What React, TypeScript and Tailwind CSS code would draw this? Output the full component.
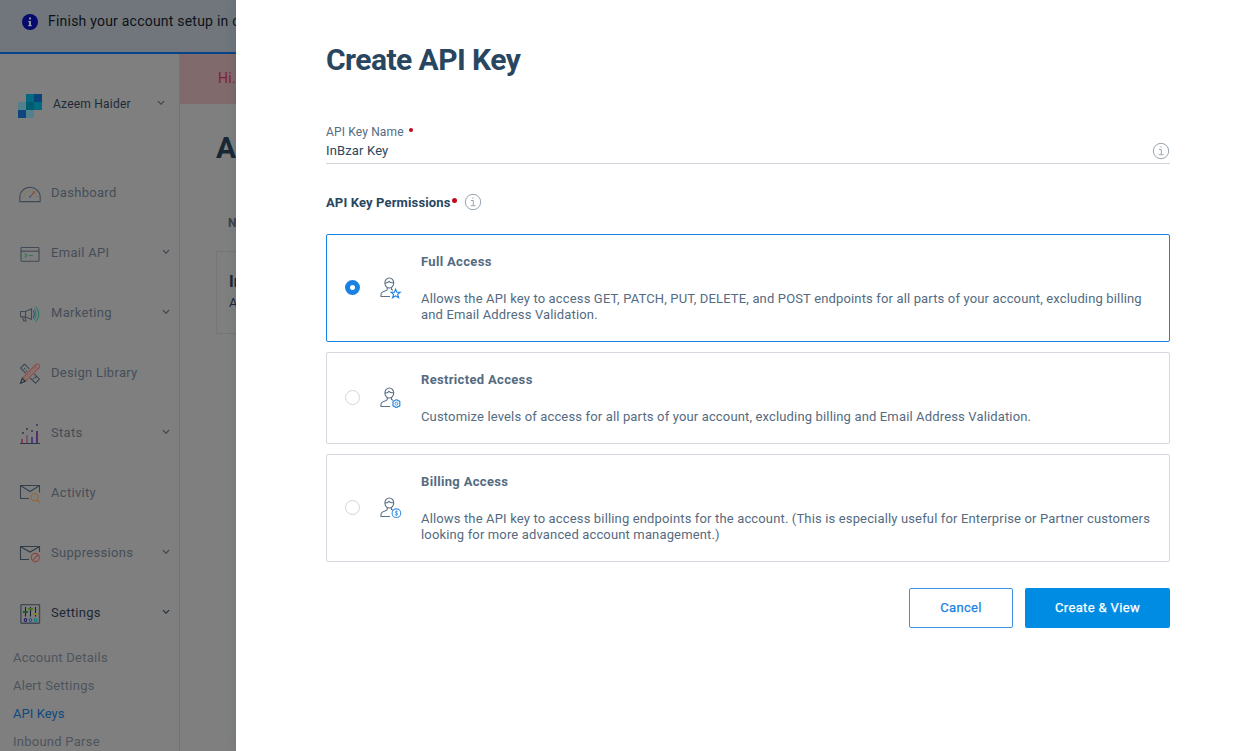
import type { ReactNode } from "react";

const S = ({ children }: { children: ReactNode }) => (
  <svg width="24" height="24" viewBox="0 0 24 24" fill="none" stroke="#3f4a55" strokeWidth="1.1" className="shrink-0">
    {children}
  </svg>
);

const Chevron = ({ dark }: { dark?: boolean }) => (
  <svg width="8" height="6" viewBox="0 0 8 6" fill="none" stroke={dark ? "#1c2935" : "#35414d"} strokeWidth="1.1" className="-mt-[3px] shrink-0">
    <path d="M1 1.2 4 4.3 7 1.2" />
  </svg>
);

const icons: Record<string, ReactNode> = {
  Dashboard: (
    <S>
      <path d="M1.8 20.6V16.2A10.2 10 0 0 1 22.2 16.2V20.6Z" />
      <path d="M5 17A7 7 0 0 1 19 17" stroke="#806f3c" strokeDasharray="1.3 2" />
      <path d="M12.3 15.5 17 10.3" stroke="#8e4a44" strokeWidth="1.2" />
      <circle cx="12" cy="16" r="1" fill="#2a6584" stroke="none" />
    </S>
  ),
  "Email API": (
    <S>
      <rect x="3" y="6.5" width="18" height="13.8" rx="0.8" />
      <path d="M3 10.2H21" />
      <path d="M6.7 12.3 8.9 14.5 6.7 16.7" stroke="#2e7c50" strokeWidth="1.2" />
      <path d="M11 14.5H15" stroke="#3d735b" />
    </S>
  ),
  Marketing: (
    <S>
      <path d="M2.5 10.5H7.5L13.5 7.8V18.5L7.5 15.8H2.5Z M7.5 10.5V15.8 M4.2 15.8 5.8 20H8L7 16" />
      <path d="M15.2 9.5Q17.4 13 15.2 17" stroke="#31577b" />
      <path d="M16 7.5Q20 13 16 19" stroke="#2f7480" />
      <path d="M17.7 5.5Q24 13 17.7 21" stroke="#2b7959" />
    </S>
  ),
  "Design Library": (
    <S>
      <path d="M11.3 7.8 6.5 3 2.5 7 7.8 12.3 M16 12.7 21.5 18.2 17.5 22.2 12.2 17 M5.7 8.3 7.2 6.8 M8 10.5 9 9.5 M15 18 16.2 16.8 M16.8 15.5 18.3 17" />
      <path d="M4.3 17.3 18 3.5Q19.5 2.3 21 3.8Q22.3 5.3 20.8 6.8L7.3 20.3" stroke="#984941" />
      <path d="M16.8 4.8 19.5 7.7 M5.8 18.8 18 6.4" stroke="#984941" strokeWidth="0.8" />
      <path d="M4.3 17.3 2.5 22.3 7.3 20.3Z" stroke="#27323d" />
    </S>
  ),
  Stats: (
    <S>
      <g stroke="none">
        <path fill="#883e52" d="M3 18h2v4H3z" />
        <path fill="#775777" d="M8 14h2v8H8z" />
        <path fill="#4c3e80" d="M13 16h2v6h-2z" />
        <path fill="#533066" d="M18 10h2v12h-2z" />
        <path fill="#2d3a46" d="M2 22h20v1H2z" />
        <path fill="#3f4a55" d="M4 11h2v2H4zM8 7h2v2H8zM13 9h2v2h-2zM18 3h2v2h-2z" />
      </g>
    </S>
  ),
  Activity: (
    <S>
      <path d="M11 17.5H2.5V4.5H21.5V11.5 M2.7 4.7 12 10.5 21.3 4.7" stroke="#35424e" />
      <circle cx="16.5" cy="16.3" r="3.6" stroke="#9a672f" />
      <path d="M19.2 19 22 21.8" stroke="#9a672f" />
    </S>
  ),
  Suppressions: (
    <S>
      <path d="M11 18.5H2.5V5.5H21.5V11 M2.7 5.7 12 11 21.3 5.7" stroke="#2f3d49" />
      <circle cx="17.3" cy="16.5" r="4.1" stroke="#90443a" />
      <path d="M14.5 19.4 20.2 13.6" stroke="#90443a" strokeWidth="1.3" />
    </S>
  ),
  Settings: (
    <S>
      <rect x="2.9" y="3.6" width="18.6" height="18.6" rx="0.6" strokeWidth="1.4" />
      <path d="M7.5 6V15.5M12.5 6V15.5M17.5 6V15.5" stroke="#17232f" />
      <path d="M5 11H10" stroke="#1f5a2d" strokeWidth="2" />
      <path d="M10 8H15" stroke="#4e7220" strokeWidth="2" />
      <path d="M15 13H20" stroke="#858522" strokeWidth="2" />
      <ellipse cx="7.5" cy="19" rx="1.2" ry="1.5" stroke="#241e66" strokeWidth="1.2" />
      <ellipse cx="12.5" cy="19" rx="1.2" ry="1.5" stroke="#155b94" strokeWidth="1.2" />
      <ellipse cx="17.6" cy="19" rx="1.2" ry="1.5" stroke="#0f8085" strokeWidth="1.2" />
    </S>
  ),
};

const nav: [string, boolean][] = [
  ["Dashboard", false],
  ["Email API", true],
  ["Marketing", true],
  ["Design Library", false],
  ["Stats", true],
  ["Activity", false],
  ["Suppressions", true],
  ["Settings", true],
];

const Logo = () => (
  <svg width="24" height="24" viewBox="0 0 24 24" shapeRendering="crispEdges">
    <path fill="#056a80" d="M8 0h8v8H8z" />
    <path fill="#0a4379" d="M16 0h8v8h-8z" />
    <path fill="#53818b" d="M0 8h8v8H0zM8 16h8v8H8z" />
    <path fill="#005c70" d="M8 8h8v8H8z" />
    <path fill="#006a80" d="M16 8h8v8h-8z" />
    <path fill="#0c467c" d="M0 16h8v8H0z" />
  </svg>
);

const Info = () => (
  <svg width="18" height="18" viewBox="0 0 18 18" fill="none" stroke="#97a5b2" className="shrink-0">
    <circle cx="9" cy="9" r="7.7" />
    <path d="M7 7.5H9.3V12.5M6.8 12.7H11.5M8.3 5H9.6" />
  </svg>
);

const User = ({ badge }: { badge: string }) => (
  <svg width="22" height="22" viewBox="0 0 22 22" fill="none" stroke="#5a7084" strokeWidth="1.1" className="shrink-0">
    <ellipse cx="9.3" cy="6" rx="4.4" ry="5" />
    <path d="M5 6Q7.5 6 9 4.3 10.5 6 13.7 5.7M7.2 10.5V12.5Q7.2 13.3 5 14 1 15.2 1 17.5V19.5H10M11.5 10.5V12.5L13 13.2" />
    {badge === "star" && (
      <path stroke="#1a82e2" d="m15.6 12.3 1.2 3h3.4l-2.6 2.1 1 3.3-3-1.9-3 1.9 1-3.3-2.6-2.1h3.4z" />
    )}
    {badge === "gear" && (
      <g stroke="#3b93e6">
        <path strokeWidth="1.3" d="m14.7 13.8 1-.9h1.4l1 .9 1.2.1.7 1.4-.4 1.3.4 1.3-.7 1.4-1.2.1-1 .9h-1.4l-1-.9-1.2-.1-.7-1.4.4-1.3-.4-1.3.7-1.4z" />
        <circle cx="16.4" cy="16.6" r="1.4" strokeWidth="1" />
      </g>
    )}
    {badge === "dollar" && (
      <g stroke="#3b93e6">
        <circle cx="16.4" cy="16.2" r="4.3" />
        <path d="M18 14.9Q16.4 13.9 15.3 14.9 14.9 16 16.4 16.2 18.2 16.5 17.6 17.6 16.5 18.6 14.9 17.6M16.4 13.3V19.1" strokeWidth=".8" />
      </g>
    )}
  </svg>
);

const options = [
  { title: "Full Access", badge: "star", on: true, lines: ["Allows the API key to access GET, PATCH, PUT, DELETE, and POST endpoints for all parts of your account, excluding billing", "and Email Address Validation."] },
  { title: "Restricted Access", badge: "gear", on: false, lines: ["Customize levels of access for all parts of your account, excluding billing and Email Address Validation."] },
  { title: "Billing Access", badge: "dollar", on: false, lines: ["Allows the API key to access billing endpoints for the account. (This is especially useful for Enterprise or Partner customers", "looking for more advanced account management.)"] },
];

export default function App() {
  return (
    <div className="relative h-[751px] w-[1256px] overflow-hidden bg-[#7f7f7f] font-['Roboto','Liberation_Sans',sans-serif] text-[13px] whitespace-nowrap">
      <div className="flex h-[54px] items-start border-b-2 border-[#07438a] bg-[#70767b] pt-[13px] pl-[22px]">
        <svg width="16" height="16" viewBox="0 0 16 16" className="mt-[1px]">
          <circle cx="8" cy="8" r="8" fill="#06096e" />
          <path fill="#90959c" d="M7 3.5h2v2H7zM6.3 7H9v4h.8v1.2H6.2V11H7V8.2h-.7z" />
        </svg>
        <span className="ml-[10px] text-[14px] leading-4 tracking-[0.22px] text-[#0d1118]">Finish your account setup in order</span>
      </div>
      <div className="flex h-[697px]">
        <aside className="flex w-[180px] shrink-0 flex-col border-r border-[#717376]">
          <div className="mt-10 flex h-6 items-center pl-[18px]">
            <Logo />
            <span className="-mt-1 ml-[11px] w-[104px] text-[12px] tracking-[0.22px] text-[#1d2a37]">Azeem Haider</span>
            <span className="-mt-[4px] flex"><Chevron /></span>
          </div>
          <nav className="mt-[45px] flex flex-col">
            {nav.map(([label, arrow]) => (
              <div key={label} className="flex h-[60px] items-center pl-[18px]">
                {icons[label]}
                <span className={"ml-[9px] w-[111px] tracking-[0.3px] " + (label === "Settings" ? "text-[#1c2935]" : "text-[#454e58]")}>{label}</span>
                {arrow && <Chevron dark={label === "Settings"} />}
              </div>
            ))}
          </nav>
          <ul className="mt-[1px] pl-[13px] tracking-[0.25px] text-[#4d555d]">
            <li className="h-7 leading-7">Account Details</li>
            <li className="h-7 leading-7">Alert Settings</li>
            <li className="h-7 leading-7 tracking-[0.05px] text-[#0c4a80]">API Keys</li>
            <li className="h-7 leading-7">Inbound Parse</li>
          </ul>
        </aside>
        <main className="flex flex-1 flex-col">
          <div className="h-[50px] bg-[#816a6b] pl-[38px] text-[14px] leading-[49px] tracking-[0.3px] text-[#7f2037]">Hi.</div>
          <h1 className="mt-6 pl-9 text-[30px] leading-10 font-bold text-[#172735]">API</h1>
          <div className="mt-[47px] pl-12 text-[12px] leading-4 font-bold text-[#37424d]">NAME</div>
          <div className="mt-[20px] ml-9 h-[83px] border border-[#747678] pt-[20px] pl-3 text-[#172735]">
            <div className="text-[16px] leading-5 font-bold">InBzar</div>
            <div className="leading-[22px]">API Key ID</div>
          </div>
        </main>
      </div>

      <section className="absolute top-0 right-0 h-[751px] w-[1020px] bg-white pr-[86px] pl-[90px] shadow-[0_0_10px_rgba(40,70,90,0.2)]">
        <h2 className="pt-10 text-[30px] leading-10 font-bold tracking-[-0.55px] text-[#294661]">Create API Key</h2>
        <div className="mt-[43px] flex h-4 items-center text-[12px] tracking-[0.15px] text-[#546b81]">
          <span className="mt-px">API Key Name</span>
          <span className="mb-[2px] ml-[5px] h-1 w-1 rounded-full bg-[#c10b1b]" />
        </div>
        <div className="flex h-[25px] items-center justify-between border-b border-[#d0d5dc] text-[#294661]">
          <span className="tracking-[0.15px]">InBzar Key</span>
          <Info />
        </div>
        <div className="mt-7 flex h-[22px] items-center font-bold text-[#294661]">
          <span className="tracking-[0.14px]">API Key Permissions</span>
          <span className="mb-[5px] ml-[1px] h-[5px] w-[5px] rounded-full bg-[#c10b1b]" />
          <span className="mb-[3px] ml-[7px]"><Info /></span>
        </div>
        <div className="mt-5 flex flex-col gap-[10px]">
          {options.map((o) => (
            <div key={o.title} className={"flex items-center rounded-[2px] border pt-[19px] pb-[18px] pl-[18px] " + (o.on ? "border-[#1a82e2]" : "border-[#d5d9df]")}>
              <span className={"-mt-[2px] h-[15px] w-[15px] rounded-full " + (o.on ? "border-[5px] border-[#1a82e2]" : "border border-[#d0d5dc]")} />
              <span className="-mt-[2px] ml-5 flex"><User badge={o.badge} /></span>
              <div className="ml-[19px] leading-4 text-[#546b81]">
                <div className="mb-[21px] font-bold tracking-[0.33px]">{o.title}</div>
                {o.lines.map((l) => <div key={l} className="tracking-[0.15px]">{l}</div>)}
              </div>
            </div>
          ))}
        </div>
        <div className="mt-[26px] flex justify-end gap-3 tracking-[0.35px] [-webkit-text-stroke:0.25px]">
          <button className="h-10 w-[104px] rounded-[2px] border border-[#3b93e6] text-[#1a82e2]">Cancel</button>
          <button className="h-10 w-[145px] rounded-[2px] bg-[#008ce3] text-white">Create &amp; View</button>
        </div>
      </section>
    </div>
  );
}
